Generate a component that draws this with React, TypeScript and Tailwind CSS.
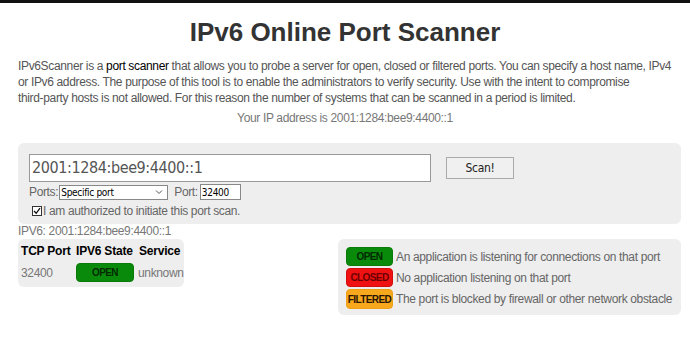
import React from "react";

const Badge: React.FC<{ kind: "open" | "closed" | "filtered"; className?: string }> = ({ kind, className = "" }) => {
  const styles = {
    open: "bg-[#0a8a0a] border-[#0b7a0b] text-[#022a02]",
    closed: "bg-[#f01212] border-[#d00e0e] text-[#6a0000]",
    filtered: "bg-[#f7a81c] border-[#eea018] text-[#2a1400]",
  };
  const label = { open: "OPEN", closed: "CLOSED", filtered: "FILTERED" };
  return (
    <span
      className={`flex shrink-0 items-center justify-center rounded-[4px] border font-bold text-[10px] tracking-[-0.6px] ${styles[kind]} ${className}`}
    >
      {label[kind]}
    </span>
  );
};

export default function App() {
  return (
    <div className="w-[690px] h-[349px] bg-white font-['Liberation_Sans',Arial,sans-serif] overflow-hidden tracking-[-0.35px]">
      <div className="h-[3px] bg-[#111]" />

      <h1 className="mt-[13px] text-center text-[26px] leading-[32px] font-bold text-[#333] tracking-normal">
        IPv6 Online Port Scanner
      </h1>

      <div className="pl-[18px] pr-[9px]">
        {/* intro, one div per line so the wraps match */}
        <div className="mt-[10px] text-[12px] leading-[16px] text-[#555] whitespace-nowrap">
          <div className="flex">
            <span>IPv6Scanner is a&nbsp;</span>
            <span className="text-black">port scanner</span>
            <span>&nbsp;that allows you to probe a server for open, closed or filtered ports. You can specify a host name, IPv4</span>
          </div>
          <div>or IPv6 address. The purpose of this tool is to enable the administrators to verify security. Use with the intent to compromise</div>
          <div>third-party hosts is not allowed. For this reason the number of systems that can be scanned in a period is limited.</div>
        </div>
        <p className="mt-[4px] pr-[9px] text-center text-[12px] leading-[16px] text-[#777]">
          Your IP address is 2001:1284:bee9:4400::1
        </p>

        {/* Scan form */}
        <div className="mt-[17px] rounded-[6px] bg-[#eeeeee] pl-[11px] pt-[11px] pb-[6px]">
          <div className="flex items-start gap-[15px]">
            <div className="w-[402px] h-[28px] border border-[#999] bg-white flex items-center pl-[2px] font-['DejaVu_Sans_Condensed','DejaVu_Sans',sans-serif] text-[16px] text-[#555] tracking-[-0.4px]">
              2001:1284:bee9:4400::1
            </div>
            <button className="mt-[3px] w-[68px] h-[22px] border border-[#aaa] bg-[#f0f0f0] text-[12px] text-[#222] font-['DejaVu_Sans_Condensed','DejaVu_Sans',sans-serif] tracking-[-0.3px]">
              Scan!
            </button>
          </div>
          <div className="mt-[2px] flex items-center text-[12px] text-[#666] h-[16px]">
            <span>Ports:</span>
            <div className="ml-[1px] w-[109px] h-[15px] border border-[#888] bg-white flex items-center justify-between px-[1px] text-[10px] text-black font-['DejaVu_Sans_Condensed','DejaVu_Sans',sans-serif] tracking-[-0.3px]">
              <span>Specific port</span>
              <svg width="8" height="6" viewBox="0 0 8 6" className="mr-[3px]">
                <path d="M1 1.5 L4 4.5 L7 1.5" fill="none" stroke="#555" strokeWidth="1" />
              </svg>
            </div>
            <span className="ml-[6px]">Port:</span>
            <div className="ml-[2px] w-[41px] h-[16px] border border-[#888] bg-white flex items-center px-[1px] text-[10px] text-black font-['DejaVu_Sans_Condensed','DejaVu_Sans',sans-serif] tracking-[-0.3px]">
              32400
            </div>
          </div>
          <div className="mt-[4px] ml-[3px] flex items-center text-[12px] text-[#666] h-[14px]">
            <span className="w-[10px] h-[10px] border border-[#333] bg-white flex items-center justify-center">
              <svg width="8" height="8" viewBox="0 0 8 8">
                <path d="M1 4 L3.2 6.3 L7 1.2" fill="none" stroke="#111" strokeWidth="1.3" />
              </svg>
            </span>
            <span className="ml-[1px]">I am authorized to initiate this port scan.</span>
          </div>
        </div>

        <div className="text-[12px] leading-[14px] text-[#777]">IPV6: 2001:1284:bee9:4400::1</div>

        <div className="mt-[1px] flex items-start justify-between">
          {/* Result table */}
          <div className="w-[166px] rounded-[6px] bg-[#eeeeee] pl-[3px] pt-[3px] pb-[5px]">
            <div className="flex text-[12px] font-bold text-black leading-[18px] tracking-[-0.2px]">
              <span className="w-[55px]">TCP Port</span>
              <span className="w-[63px]">IPV6 State</span>
              <span>Service</span>
            </div>
            <div className="mt-[3px] flex items-center text-[12px] text-[#777]">
              <span className="w-[55px]">32400</span>
              <Badge kind="open" className="w-[58px] h-[19px]" />
              <span className="ml-[4px]">unknown</span>
            </div>
          </div>

          {/* Legend */}
          <div className="w-[343px] rounded-[6px] bg-[#eeeeee] pl-[8px] pt-[8px] pb-[6px] flex flex-col gap-[2px] text-[12px] text-[#666]">
            <div className="flex items-center gap-[3px]">
              <Badge kind="open" className="w-[47px] h-[19px]" />
              <span className="whitespace-nowrap">An application is listening for connections on that port</span>
            </div>
            <div className="flex items-center gap-[3px]">
              <Badge kind="closed" className="w-[47px] h-[19px]" />
              <span className="whitespace-nowrap">No application listening on that port</span>
            </div>
            <div className="flex items-center gap-[3px]">
              <Badge kind="filtered" className="w-[47px] h-[20px]" />
              <span className="whitespace-nowrap">The port is blocked by firewall or other network obstacle</span>
            </div>
          </div>
        </div>
      </div>
    </div>
  );
}
